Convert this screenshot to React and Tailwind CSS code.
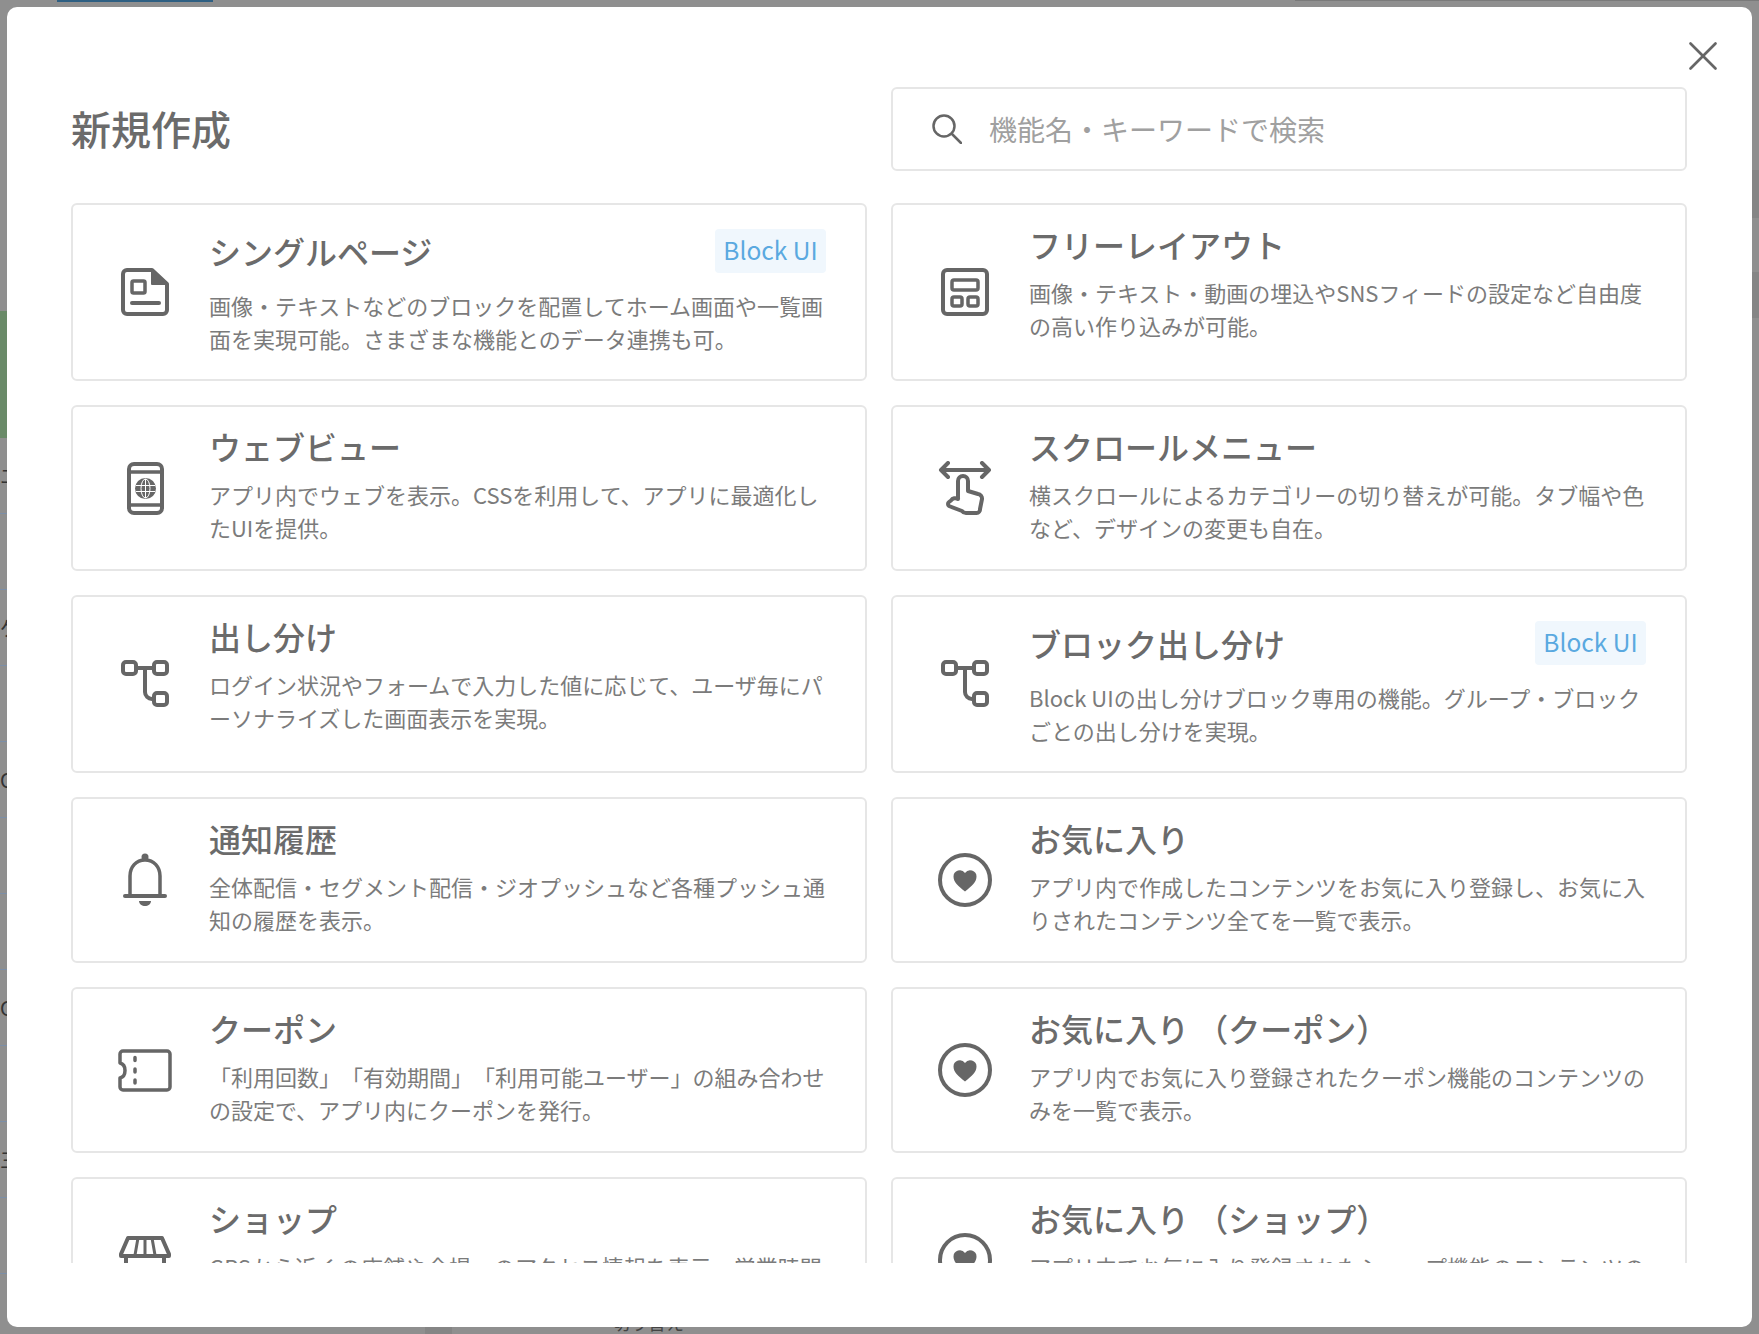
import React from "react";
import { X } from "lucide-react";

const FONT = "font-['Noto_Sans_CJK_JP','Noto_Sans_JP',sans-serif] [text-spacing-trim:space-all]";

function PageIcon() {
  return (
    <svg width="48" height="48" viewBox="0 0 48 48" fill="none" stroke="currentColor" strokeWidth="4" strokeLinejoin="round" strokeLinecap="round">
      <path d="M6 2h25l15 14v26a4 4 0 0 1-4 4H6a4 4 0 0 1-4-4V6a4 4 0 0 1 4-4z" />
      <path d="M31 2l15 14H31z" fill="currentColor" strokeWidth="2" />
      <rect x="11" y="13" width="13" height="12" rx="1.5" strokeWidth="3.5" />
      <path d="M11 35h27" />
    </svg>
  );
}

function LayoutIcon() {
  return (
    <svg width="48" height="48" viewBox="0 0 48 48" fill="none" stroke="currentColor" strokeWidth="4" strokeLinejoin="round">
      <rect x="2" y="2" width="44" height="44" rx="4" />
      <rect x="11" y="12" width="26" height="10" rx="2" strokeWidth="3.5" />
      <rect x="11" y="29" width="10" height="9" rx="2" strokeWidth="3.5" />
      <rect x="27" y="29" width="10" height="9" rx="2" strokeWidth="3.5" />
    </svg>
  );
}

function PhoneIcon() {
  return (
    <svg width="37" height="53" viewBox="0 0 37 53" fill="none" stroke="currentColor" strokeWidth="4">
      <rect x="2" y="2" width="33" height="49" rx="5" />
      <path d="M2 10h33M2 43h33" strokeWidth="3.5" />
      <circle cx="18.5" cy="26.5" r="10.5" fill="currentColor" stroke="none" />
      <g stroke="#fff" strokeWidth="1" fill="none">
        <ellipse cx="18.5" cy="26.5" rx="4.500" ry="9.500" />
        <path d="M18.500 17v19M9 23.500h19M9 29.500h19" />
      </g>
    </svg>
  );
}

function BranchIcon() {
  return (
    <svg width="48" height="48" viewBox="0 0 48 48" fill="none" stroke="currentColor" strokeWidth="4" strokeLinejoin="round">
      <rect x="2" y="2" width="13" height="12" rx="3" />
      <rect x="33" y="2" width="13" height="12" rx="3" />
      <rect x="33" y="33" width="13" height="12" rx="3" />
      <path d="M15 8h18M24 8v24a7 7 0 0 0 7 7h2" />
    </svg>
  );
}

function ScrollIcon() {
  return (
    <svg width="54" height="54" viewBox="0 0 54 54" fill="none" stroke="currentColor" strokeWidth="4" strokeLinejoin="round" strokeLinecap="round">
      <path d="M3 9h48M10 2L3 9l7 7M44 2l7 7-7 7" />
      <path d="M20 38V20a5 5 0 0 1 10 0v10l10 3a4.500 4.500 0 0 1 4 5l-2 10a3.500 3.500 0 0 1-3.500 4H28a5 5 0 0 1-4-2L11 45a2.500 2.500 0 0 1 0-4l2-1.500a5 5 0 0 1 7-1.500" />
    </svg>
  );
}

function BellIcon() {
  return (
    <svg width="44" height="54" viewBox="0 0 44 54" fill="none" stroke="currentColor" strokeWidth="4" strokeLinecap="round">
      <circle cx="22" cy="4" r="3.500" fill="currentColor" stroke="none" />
      <path d="M7 42V23C7 14 13 7 22 7s15 7 15 16v19" strokeWidth="3.500" />
      <path d="M2 43h40" />
      <path d="M16 48h12c0 3-3 5-6 5s-6-2-6-5z" fill="currentColor" stroke="none" />
    </svg>
  );
}

function CouponIcon() {
  return (
    <svg width="54" height="43" viewBox="0 0 54 43" fill="none" stroke="currentColor" strokeWidth="3.500" strokeLinejoin="round">
      <path d="M5 2h44a3 3 0 0 1 3 3v33a3 3 0 0 1-3 3H5a3 3 0 0 1-3-3v-9c4-1 5-4.500 5-7.500S6 15 2 14V5a3 3 0 0 1 3-3z" />
      <path d="M17 8.500v3M17 20v3M17 31v3" strokeLinecap="round" />
    </svg>
  );
}

function HeartIcon() {
  return (
    <svg width="54" height="54" viewBox="0 0 54 54" fill="none">
      <circle cx="27" cy="27" r="25" stroke="currentColor" strokeWidth="4" />
      <path d="M27 38.500C20 33 15.500 29 15.500 23.500a6.300 6.300 0 0 1 11.500-3.500 6.300 6.300 0 0 1 11.500 3.500C38.500 29 34 33 27 38.500z" fill="currentColor" />
    </svg>
  );
}

function ShopIcon() {
  return (
    <svg width="52" height="48" viewBox="0 0 52 48" fill="none" stroke="currentColor" strokeWidth="4" strokeLinejoin="round">
      <path d="M9 2h34l7 16v2H2v-2z" />
      <path d="M19 2l-3 17M26 2v17M33 2l3 17" strokeWidth="3" />
      <path d="M7 20v26h38V20" />
    </svg>
  );
}

const cards = [
  {
    icon: <PageIcon />,
    title: "シングルページ",
    badge: true,
    lines: ["画像・テキストなどのブロックを配置してホーム画面や一覧画", "面を実現可能。さまざまな機能とのデータ連携も可。"],
  },
  {
    icon: <LayoutIcon />,
    title: "フリーレイアウト",
    lines: ["画像・テキスト・動画の埋込やSNSフィードの設定など自由度", "の高い作り込みが可能。"],
  },
  {
    icon: <PhoneIcon />,
    title: "ウェブビュー",
    lines: ["アプリ内でウェブを表示。CSSを利用して、アプリに最適化し", "たUIを提供。"],
  },
  {
    icon: <ScrollIcon />,
    title: "スクロールメニュー",
    lines: ["横スクロールによるカテゴリーの切り替えが可能。タブ幅や色", "など、デザインの変更も自在。"],
  },
  {
    icon: <BranchIcon />,
    title: "出し分け",
    lines: ["ログイン状況やフォームで入力した値に応じて、ユーザ毎にパ", "ーソナライズした画面表示を実現。"],
  },
  {
    icon: <BranchIcon />,
    title: "ブロック出し分け",
    badge: true,
    lines: ["Block UIの出し分けブロック専用の機能。グループ・ブロック", "ごとの出し分けを実現。"],
  },
  {
    icon: <BellIcon />,
    title: "通知履歴",
    lines: ["全体配信・セグメント配信・ジオプッシュなど各種プッシュ通", "知の履歴を表示。"],
  },
  {
    icon: <HeartIcon />,
    title: "お気に入り",
    lines: ["アプリ内で作成したコンテンツをお気に入り登録し、お気に入", "りされたコンテンツ全てを一覧で表示。"],
  },
  {
    icon: <CouponIcon />,
    title: "クーポン",
    lines: ["「利用回数」「有効期間」「利用可能ユーザー」の組み合わせ", "の設定で、アプリ内にクーポンを発行。"],
  },
  {
    icon: <HeartIcon />,
    title: "お気に入り （クーポン）",
    lines: ["アプリ内でお気に入り登録されたクーポン機能のコンテンツの", "みを一覧で表示。"],
  },
  {
    icon: <ShopIcon />,
    title: "ショップ",
    lines: ["GPSから近くの店舗や会場、のアクセス情報を表示。営業時間", "などの詳細情報も掲載可能。"],
  },
  {
    icon: <HeartIcon />,
    title: "お気に入り （ショップ）",
    lines: ["アプリ内でお気に入り登録されたショップ機能のコンテンツの", "みを一覧で表示。"],
  },
];

// first letters of the list rows of the page behind the overlay
const railRows = ["エ", "", "ゲ", "", "O", "", "", "C", "", "三", "", ""];

function Card({ icon, title, badge, lines }) {
  return (
    <div className="flex rounded-[6px] border-2 border-[#e6e6e6] pl-[36px] pr-[39px]">
      <div className="flex w-[72px] shrink-0 items-center justify-center text-[#666666]">{icon}</div>
      <div className={`ml-[28px] min-w-0 flex-1 pt-[15px] ${badge ? "pb-[24px]" : "pb-[25px]"}`}>
        <div className={`flex items-center justify-between ${badge ? "h-[61px]" : "h-[48px]"}`}>
          <h3 className="text-[32px] leading-[48px] font-medium text-[#6b6b6b]">{title}</h3>
          {badge && (
            <span className="flex h-[44px] w-[111px] items-center justify-center rounded-[4px] bg-[#f0f7fd] text-[24.5px] text-[#5aa9e0]">
              Block UI
            </span>
          )}
        </div>
        <p className="mt-[8px] text-[22px] leading-[33px] text-[#7b7b7b]">
          {lines.map((l) => (
            <span key={l} className="block whitespace-nowrap">{l}</span>
          ))}
        </p>
      </div>
    </div>
  );
}

function Backdrop() {
  return (
    <div className="absolute inset-0 flex flex-col overflow-hidden">
      <div className="flex h-[7px] shrink-0 justify-between pl-[57px]">
        <div className="h-[2px] w-[156px] bg-[#2e5f82]" />
        <div className="h-[1px] w-[464px] bg-[#7a7a7a]" />
      </div>
      <div className="flex min-h-0 flex-1 justify-between overflow-hidden">
        <div className="w-[7px] overflow-hidden pt-[304px]">
          <div className="h-[127px] bg-[#6a8a68]" />
          {railRows.map((ch, i) => (
            <div key={i} className="flex h-[76px] items-center overflow-hidden border-b border-[#7c8fa8] text-[20px] text-[#333333]">
              <span className="whitespace-nowrap">{ch}</span>
            </div>
          ))}
        </div>
        <div className="w-[7px] pt-[163px]">
          <div className="h-[48px] bg-[#858585]" />
          <div className="mt-[54px] h-[46px] bg-[#858585]" />
        </div>
      </div>
      <div className="flex h-[7px] shrink-0 overflow-hidden pl-[425px]">
        <div className="h-full w-[27px] bg-[#858585]" />
        <span className="ml-[160px] -mt-[18px] text-[18px] leading-[27px] text-[#444444]">切り替え</span>
      </div>
    </div>
  );
}

export default function App() {
  return (
    <div className={`relative h-[1334px] overflow-hidden bg-[#8f8f8f] p-[7px] ${FONT}`}>
      <Backdrop />

      <div className="relative flex h-full flex-col rounded-[10px] bg-white pb-[64px] pl-[64px] pr-[65px] pt-[80px]">
        <button className="absolute right-[24px] top-[24px] text-[#666666]">
          <X size={50} strokeWidth={1.3} />
        </button>

        <div className="mb-[32px] grid grid-cols-2 gap-x-[24px]">
          <h2 className="flex items-center pb-[3px] text-[40px] font-medium text-[#6b6b6b]">新規作成</h2>
          <div className="flex h-[84px] items-center rounded-[6px] border-2 border-[#e6e6e6] pl-[39px]">
            <svg width="30" height="30" viewBox="0 0 30 30" fill="none" stroke="#666666" strokeWidth="2.500" strokeLinecap="round">
              <circle cx="12" cy="12" r="10.500" />
              <path d="M20 20l9 9" />
            </svg>
            <span className="ml-[27px] text-[28px] text-[#a0a0a0]">機能名・キーワードで検索</span>
          </div>
        </div>

        <div className="min-h-0 flex-1 overflow-hidden">
          <div className="grid grid-cols-2 gap-x-[24px] gap-y-[24px]">
            {cards.map((c) => (
              <Card key={c.title} {...c} />
            ))}
          </div>
        </div>
      </div>
    </div>
  );
}
